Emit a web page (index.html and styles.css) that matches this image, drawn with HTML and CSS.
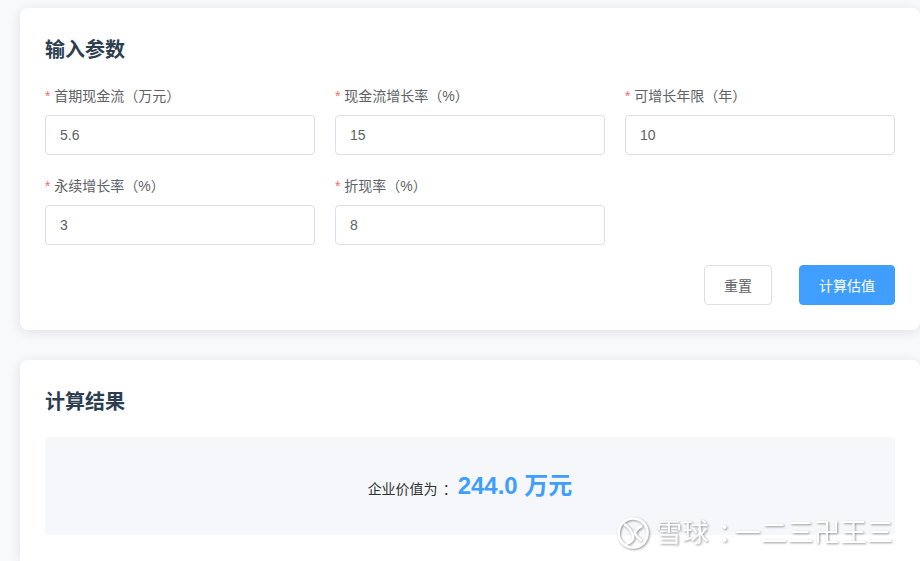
FILE: index.html
```html
<!DOCTYPE html>
<html lang="zh">
<head>
<meta charset="utf-8">
<link rel="stylesheet" href="styles.css">
<title>估值</title>
</head>
<body>
<section class="card card-input">
  <h2 class="title">输入参数</h2>
  <div class="grid">
    <div class="field"><label class="label"><span class="req">*</span> 首期现金流（万元）</label><input class="input" value="5.6"></div>
    <div class="field"><label class="label"><span class="req">*</span> 现金流增长率（%）</label><input class="input" value="15"></div>
    <div class="field"><label class="label"><span class="req">*</span> 可增长年限（年）</label><input class="input" value="10"></div>
    <div class="field"><label class="label"><span class="req">*</span> 永续增长率（%）</label><input class="input" value="3"></div>
    <div class="field"><label class="label"><span class="req">*</span> 折现率（%）</label><input class="input" value="8"></div>
  </div>
  <div class="actions">
    <button class="btn">重置</button>
    <button class="btn primary">计算估值</button>
  </div>
</section>
<section class="card card-result">
  <h2 class="title">计算结果</h2>
  <div class="result"><span class="result-label">企业价值为<span class="colon">：</span></span><span class="result-value">244.0 万元</span></div>
</section>
<div class="watermark">
  <svg class="wm-icon" width="34" height="34" viewBox="0 0 34 34" fill="none" stroke="#fff" stroke-width="2.6"><circle cx="17" cy="17" r="14.5"/><path d="M8 8c5 3 8 8 9 12s-3 7-7 8M26 10c-3 1-6 4-7 6s4 7 7 9"/></svg>
  <span class="wm-text">雪球<span class="wm-colon">：</span>一二三卍王三</span>
</div>
</body>
</html>
```
FILE: styles.css
```css
* { box-sizing: border-box; }
html, body { margin: 0; height: 561px; overflow: hidden; }
body {
  position: relative;
  background: #f8f9fb;
  padding: 8px 0 0 20px;
  font-family: "Liberation Sans", "Noto Sans CJK SC", sans-serif;
  color: #303133;
}
.card {
  background: #fff;
  border-radius: 8px;
  box-shadow: 0 2px 12px rgba(0,0,0,.1);
  padding: 27px 25px 25px;
}
.card-input { height: 322px; margin-bottom: 30px; }
.card-result { height: 201px; border-radius: 8px 8px 0 0; }
.title {
  margin: 0 0 20px;
  font-size: 20px;
  line-height: 30px;
  font-weight: 700;
  color: #2c3e50;
}
.card-input .title { margin-bottom: 21px; }
.grid {
  display: grid;
  grid-template-columns: repeat(3, 270px);
  column-gap: 20px;
  row-gap: 21px;
}
.field { display: flex; flex-direction: column; }
.label { font-size: 14px; line-height: 20px; height: 29px; color: #606266; }
.req { color: #f56c6c; }
.input {
  width: 270px;
  height: 40px;
  border: 1px solid #dcdfe6;
  border-radius: 4px;
  padding: 0 14px;
  font: 14px "Liberation Sans", "Noto Sans CJK SC", sans-serif;
  color: #606266;
  background: #fff;
}
.actions { display: flex; justify-content: flex-end; gap: 27px; margin-top: 20px; }
.btn {
  height: 40px;
  min-width: 68px;
  padding: 0 19px;
  background: #fff;
  border: 1px solid #dcdfe6;
  border-radius: 4px;
  color: #606266;
  font: 14px "Liberation Sans", "Noto Sans CJK SC", sans-serif;
}
.primary { background: #409eff; border-color: #409eff; color: #fff; }
.result {
  height: 98px;
  background: #f5f7fa;
  border-radius: 4px;
  display: flex;
  align-items: baseline;
  justify-content: center;
  gap: 7px;
  padding-top: 33px;
}
.result-label { font-size: 14px; color: #303133; white-space: nowrap; }
.colon { font-feature-settings: "palt"; margin: 0 1px 0 5px; }
.result-value { font-size: 24px; line-height: 32px; font-weight: 700; color: #409eff; white-space: nowrap; }
.watermark {
  position: absolute;
  left: 616px;
  top: 516px;
  display: flex;
  align-items: center;
  gap: 6px;
  filter: drop-shadow(1px 1px 1px rgba(0,0,0,.4));
}
.wm-text { color: #fff; font-size: 26px; line-height: 34px; letter-spacing: .5px; white-space: nowrap; }
.wm-colon { font-feature-settings: "palt"; margin: 0 3px 0 9px; }
```
